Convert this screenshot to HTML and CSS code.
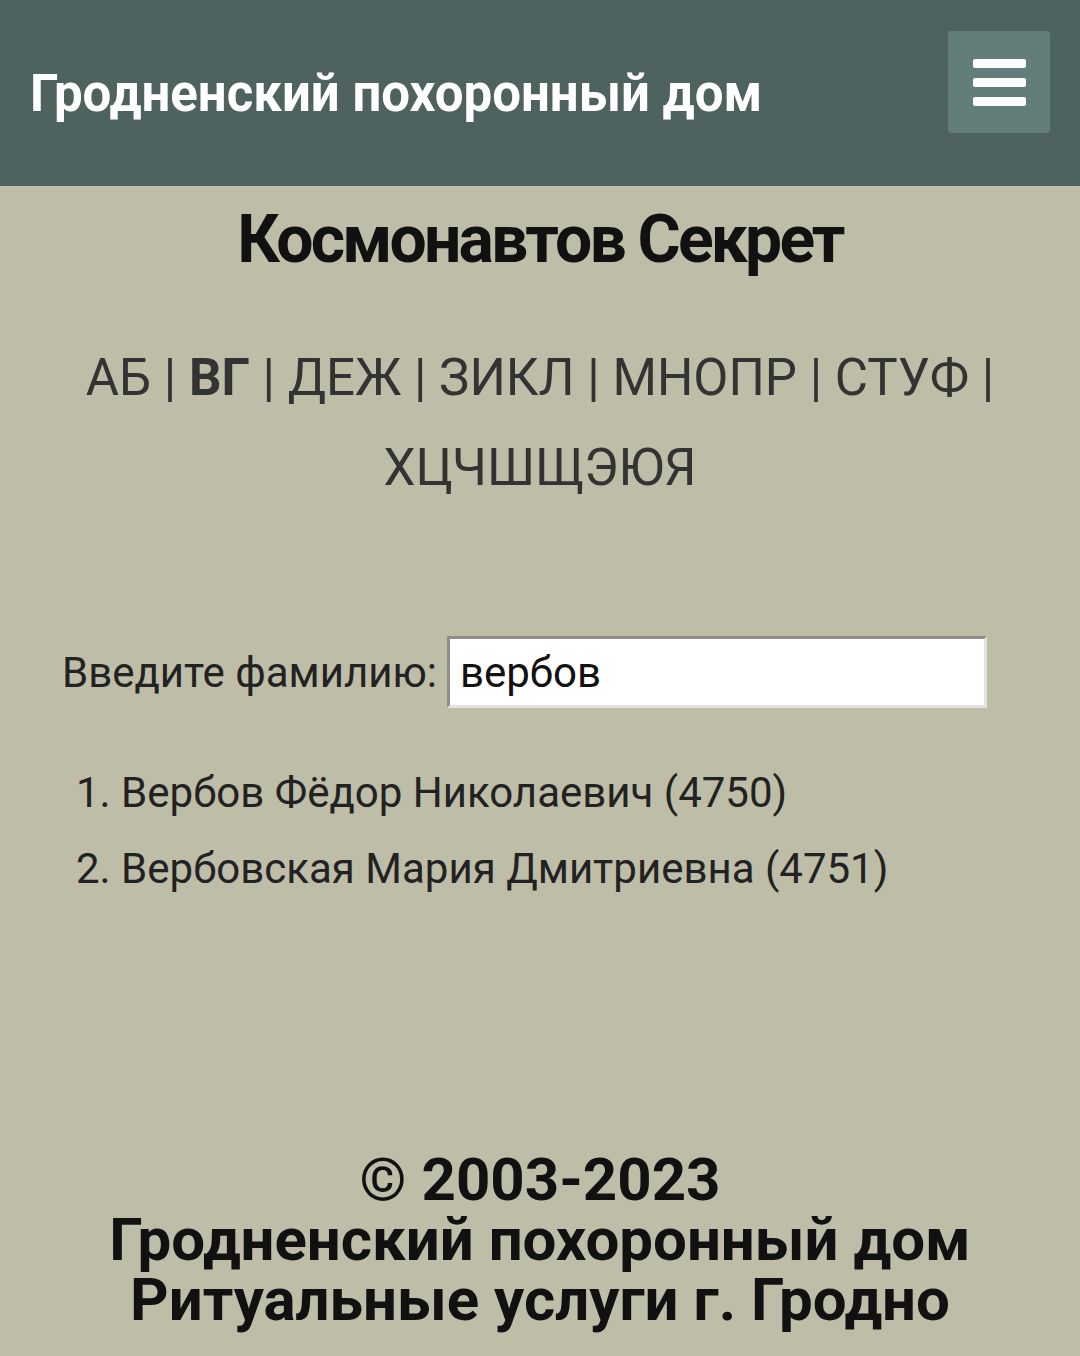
FILE: index.html
```html
<!DOCTYPE html>
<html lang="ru">
<head>
    <meta charset="UTF-8">
    <meta name="viewport" content="width=device-width, initial-scale=1.0">
    <title>Гродненский похоронный дом</title>
    <link rel="stylesheet" href="styles.css">
</head>
<body>
    <header class="top">
        <a class="brand" href="#">Гродненский похоронный дом</a>
        <button class="burger" type="button">
            <span></span>
            <span></span>
            <span></span>
        </button>
    </header>

    <main class="content">
        <h1 class="title">Космонавтов Секрет</h1>

        <nav class="letters">
            <a href="#">АБ</a> | <b>ВГ</b> | <a href="#">ДЕЖ</a> | <a href="#">ЗИКЛ</a> | <a href="#">МНОПР</a> | <a href="#">СТУФ</a> |
            <a href="#">ХЦЧШЩЭЮЯ</a>
        </nav>

        <form class="search">
            <label for="surname">Введите фамилию:</label>
            <input id="surname" type="text" value="вербов">
        </form>

        <ol class="results">
            <li><a href="#">Вербов Фёдор Николаевич</a> (4750)</li>
            <li><a href="#">Вербовская Мария Дмитриевна</a> (4751)</li>
        </ol>
    </main>

    <footer class="bottom">
        <p>© 2003-2023</p>
        <p>Гродненский похоронный дом</p>
        <p>Ритуальные услуги г. Гродно</p>
    </footer>
</body>
</html>
```

FILE: styles.css
```css
*{
    margin: 0;
    padding: 0;
    box-sizing: border-box;
}

body{
    width: 1080px;
    min-height: 1356px;
    background-color: #bebda7;
    font-family: Roboto, "Liberation Sans", sans-serif;
    color: #333;
    display: flex;
    flex-direction: column;
}

a{
    color: inherit;
    text-decoration: none;
}

.top{
    height: 186px;
    background-color: #4e6260;
    display: flex;
    align-items: center;
    justify-content: space-between;
    padding: 0 30px 0 30px;
}

.brand{
    color: #fff;
    font-size: 51px;
    font-weight: 700;
}

.burger{
    width: 102px;
    height: 102px;
    background-color: #637e78;
    border: none;
    border-radius: 3px;
    display: flex;
    flex-direction: column;
    align-items: center;
    justify-content: center;
    gap: 10px;
    margin-bottom: 22px;
}

.burger span{
    display: block;
    width: 53px;
    height: 9px;
    background-color: #fff;
    border-radius: 2px;
}

.content{
    flex: 1;
    text-align: center;
}

.title{
    font-size: 66px;
    font-weight: 700;
    letter-spacing: -2.8px;
    color: #111;
    margin-top: 14px;
    line-height: 80px;
}

.letters{
    font-size: 51px;
    line-height: 90px;
    padding: 0 60px;
    margin-top: 53px;
}

.letters b{
    font-weight: 700;
}

.search{
    display: flex;
    align-items: center;
    margin: 123px 0 0 62px;
    font-size: 42px;
    color: #222;
}

.search label{
    margin-right: 10px;
}

.search input{
    width: 540px;
    height: 72px;
    border: 3px solid #8f8f8a;
    border-right-color: #e2e2e2;
    border-bottom-color: #e2e2e2;
    background: #fff;
    font-family: Roboto, "Liberation Sans", sans-serif;
    font-size: 42px;
    color: #111;
    padding: 0 10px;
    outline: none;
}

.results{
    text-align: left;
    list-style: none;
    counter-reset: n;
    margin: 47px 0 0 76px;
    font-size: 42px;
    color: #222;
}

.results li{
    line-height: 76px;
    counter-increment: n;
}

.results li::before{
    content: counter(n) ". ";
}

.bottom{
    text-align: center;
    font-size: 60px;
    font-weight: 700;
    line-height: 60px;
    color: #111;
    padding-bottom: 26px;
}
```
